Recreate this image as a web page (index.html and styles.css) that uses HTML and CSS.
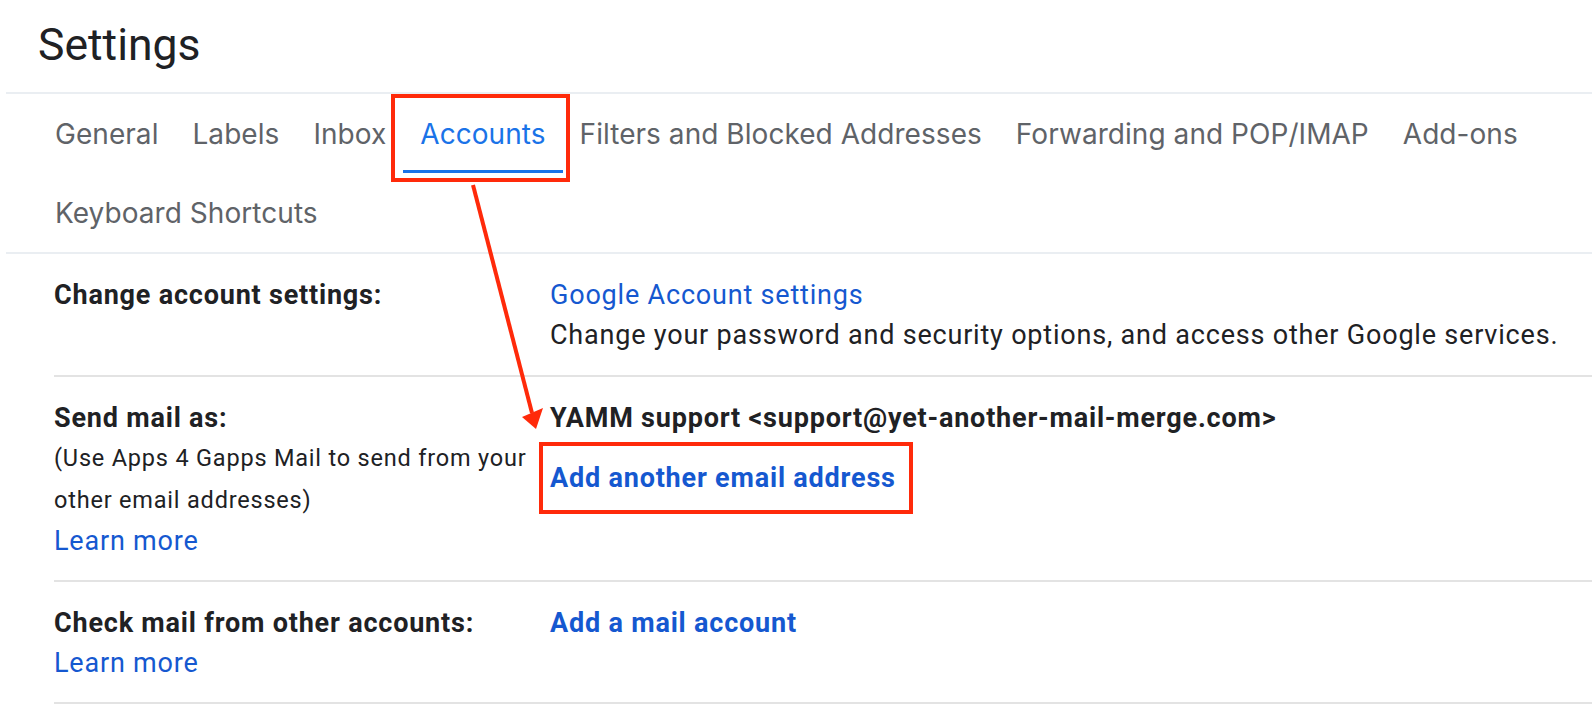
FILE: index.html
```html
<!DOCTYPE html>
<html lang="en">
<head>
<meta charset="utf-8">
<title>Settings</title>
<link rel="stylesheet" href="styles.css">
</head>
<body>
<div class="page">
  <h1 class="title">Settings</h1>
  <nav class="tabs">
    <a class="tab">General</a>
    <a class="tab">Labels</a>
    <a class="tab">Inbox</a>
    <a class="tab tab-active">Accounts<span class="callout callout-tab"></span></a>
    <a class="tab">Filters and Blocked Addresses</a>
    <a class="tab">Forwarding and POP/IMAP</a>
    <a class="tab">Add-ons</a>
    <a class="tab">Keyboard Shortcuts</a>
  </nav>
  <section class="rows">
    <div class="row row-first">
      <div class="label-col">
        <div class="label">Change account settings:</div>
      </div>
      <div class="value-col">
        <a class="link">Google Account settings</a>
        <div class="text">Change your password and security options, and access other Google services.</div>
      </div>
    </div>
    <div class="row row-mid">
      <div class="label-col">
        <div class="label">Send mail as:</div>
        <div class="desc">(Use Apps 4 Gapps Mail to send from your other email addresses)</div>
        <a class="link learn">Learn more</a>
      </div>
      <div class="value-col">
        <div class="strong">YAMM support &lt;support@yet-another-mail-merge.com&gt;</div>
        <div class="action-wrap"><a class="link bold action">Add another email address<span class="callout callout-action"></span></a></div>
      </div>
    </div>
    <div class="row row-last">
      <div class="label-col">
        <div class="label">Check mail from other accounts:</div>
        <a class="link learn">Learn more</a>
      </div>
      <div class="value-col">
        <a class="link bold">Add a mail account</a>
      </div>
    </div>
  </section>
  <svg class="arrow" width="1592" height="723" viewBox="0 0 1592 723" aria-hidden="true">
    <line x1="473" y1="185" x2="532" y2="413" stroke="#ff2a0a" stroke-width="4"/>
    <polygon points="522,417 543,408 536,429" fill="#ff2a0a"/>
  </svg>
</div>
</body>
</html>
```
FILE: styles.css
```css
* { box-sizing: border-box; }
html, body { margin: 0; padding: 0; background: #fff; }
body {
  font-family: Roboto, "Liberation Sans", Arial, sans-serif;
  color: #202124;
}
.page {
  position: relative;
  width: 1592px;
  min-height: 723px;
  overflow: hidden;
}
.title {
  margin: 0;
  height: 92px;
  padding: 15px 0 0 38px;
  font-family: Roboto, "Liberation Sans", sans-serif;
  font-weight: 400;
  font-size: 44.5px;
  line-height: 60px;
  color: #202124;
}
.tabs {
  display: flex;
  flex-wrap: wrap;
  margin-left: 6px;
  padding-left: 32px;
  border-top: 2px solid #eaeef2;
  border-bottom: 2px solid #eaeef2;
}
.tab {
  position: relative;
  display: flex;
  align-items: center;
  height: 79px;
  padding: 3px 17px 0 17px;
  border-bottom: 3px solid transparent;
  font-family: Inter, "Open Sans", sans-serif;
  font-size: 28px;
  letter-spacing: 0.05px;
  color: #5f6368;
  white-space: nowrap;
}
.tab-active {
  color: #1a73e8;
  border-bottom-color: #1a73e8;
}
.callout {
  position: absolute;
  border: 4px solid #ff2a0a;
  pointer-events: none;
}
.callout-tab {
  left: -12px;
  right: -7px;
  top: 0;
  bottom: -12px;
}
.rows {
  margin-left: 54px;
}
.row {
  display: grid;
  grid-template-columns: 496px 1fr;
  padding: 21px 0 20px 0;
  border-bottom: 2px solid #e3e3e3;
  font-size: 27px;
  letter-spacing: 0.8px;
  line-height: 40px;
}
.row-mid {
  padding-bottom: 19px;
}
.row-last {
  padding-bottom: 19px;
}
.label-col, .value-col {
  display: flex;
  flex-direction: column;
  align-items: flex-start;
}
.label {
  font-weight: 700;
}
.desc {
  font-size: 23.5px;
  letter-spacing: 0.8px;
  line-height: 41.5px;
  max-width: 490px;
}
.link {
  color: #1558d0;
  text-decoration: none;
}
.bold, .strong {
  font-weight: 700;
}
.action-wrap {
  margin-top: 20px;
}
.action {
  position: relative;
  display: inline-block;
}
.callout-action {
  left: -11px;
  right: -17px;
  top: -16px;
  bottom: -16px;
}
.arrow {
  position: absolute;
  left: 0;
  top: 0;
  pointer-events: none;
}
```
